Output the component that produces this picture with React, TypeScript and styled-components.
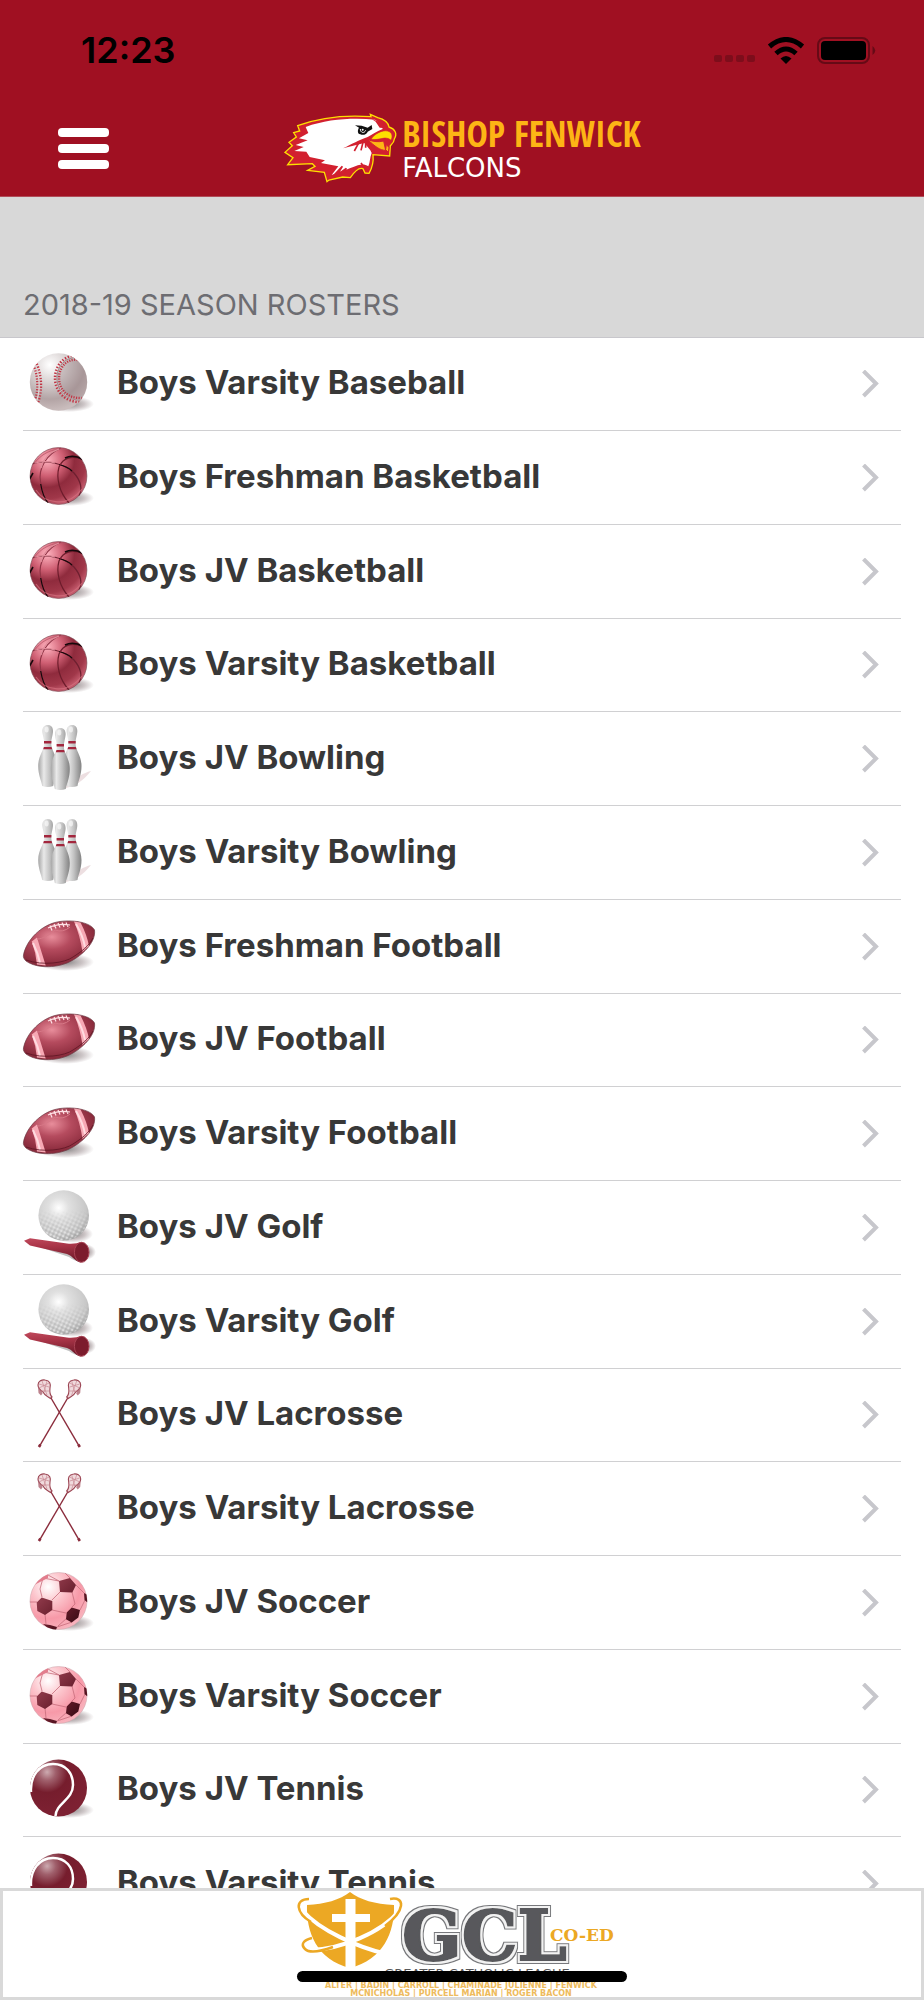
import React from "react";
import styled, { createGlobalStyle } from "styled-components";

const GlobalStyle = createGlobalStyle`
  *, *::before, *::after { box-sizing: border-box; }
  body {
    margin: 0;
    background: #ffffff;
    font-family: Inter, "Liberation Sans", sans-serif;
  }
`;

const Screen = styled.div`
  display: flex;
  flex-direction: column;
  height: 100vh;
  overflow: hidden;
  position: relative;
`;

const Header = styled.header`
  flex: none;
  background: #a01022;
  border-bottom: 1px solid #b04c58;
`;

const StatusBar = styled.div`
  display: flex;
  align-items: center;
  justify-content: space-between;
  height: 100px;
  padding: 0 48px 0 81px;
`;

const Clock = styled.time`
  font-size: 36px;
  line-height: 40px;
  font-weight: 600;
  color: #000000;
`;

const StatusIcons = styled.div`
  display: flex;
  align-items: center;
  gap: 12px;
`;

const NavBar = styled.div`
  display: grid;
  grid-template-columns: 1fr auto 1fr;
  align-items: center;
  height: 96px;
  padding: 0 58px;
`;

const MenuButton = styled.button`
  display: flex;
  flex-direction: column;
  justify-content: space-between;
  width: 51px;
  height: 41px;
  padding: 0;
  border: 0;
  background: none;
  cursor: pointer;
`;

const MenuBar = styled.span`
  height: 9px;
  border-radius: 4px;
  background: #ffffff;
`;

const Brand = styled.a`
  display: flex;
  align-items: center;
  gap: 4px;
  text-decoration: none;
`;

const BrandText = styled.span`
  display: flex;
  flex-direction: column;
`;

const BrandName = styled.span`
  font-family: "Open Sans Condensed", "Roboto Condensed", "Open Sans", sans-serif;
  font-size: 36px;
  line-height: 40px;
  font-weight: 700;
  color: #fdb515;
  white-space: nowrap;
`;

const BrandTeam = styled.span`
  font-family: "DejaVu Sans", sans-serif;
  font-size: 26px;
  line-height: 28px;
  color: #ffffff;
`;

const Content = styled.main`
  flex: 1;
  min-height: 0;
  overflow-y: auto;
  scrollbar-width: none;
`;

const SectionTitle = styled.h1`
  display: flex;
  align-items: flex-end;
  height: 141px;
  margin: 0;
  padding: 0 23px 15px;
  background: #d8d8d8;
  border-bottom: 1px solid #c8c7cc;
  font-size: 29px;
  line-height: 34px;
  font-weight: 400;
  color: #6d6d72;
`;

const RosterList = styled.ul`
  list-style: none;
  margin: 0;
  padding: 0 23px;
`;

const RosterItem = styled.li`
  height: 94px;
  border-bottom: 1px solid #d0d0d2;

  &:first-child,
  &:nth-child(4n) {
    height: 93px;
  }
`;

const RosterLink = styled.a`
  display: flex;
  align-items: center;
  height: 100%;
  padding-right: 22px;
  color: #383838;
  text-decoration: none;
`;

const RosterName = styled.span`
  flex: 1;
  padding: 0 0 4px 22px;
  font-size: 33px;
  line-height: 40px;
  font-weight: 700;
`;

const SportIcon = styled.svg`
  flex: none;
  width: 72px;
  height: 72px;
  overflow: visible;
`;

const Sponsor = styled.footer`
  flex: none;
  height: 112px;
  border: 3px solid #d9d9d9;
  background: #ffffff;
`;

const SponsorLink = styled.a`
  display: flex;
  justify-content: center;
`;

const HomeIndicator = styled.div`
  position: absolute;
  left: 50%;
  bottom: 18px;
  width: 330px;
  height: 11px;
  margin-left: -165px;
  border-radius: 6px;
  background: #000000;
`;

const SharedDefs = styled.svg`
  position: absolute;
`;

const Defs = () => (
  <SharedDefs width="0" height="0" aria-hidden="true">
    <defs>
      <radialGradient id="shadow">
        <stop offset="0" stopColor="#000" stopOpacity=".5" />
        <stop offset=".6" stopColor="#4a3035" stopOpacity=".28" />
        <stop offset="1" stopColor="#4a3035" stopOpacity="0" />
      </radialGradient>
      <radialGradient id="baseball" cx=".35" cy=".2" r=".8">
        <stop offset="0" stopColor="#ffffff" />
        <stop offset=".35" stopColor="#dcd6d6" />
        <stop offset=".75" stopColor="#b3a4a5" />
        <stop offset="1" stopColor="#c9bcbc" />
      </radialGradient>
      <radialGradient id="basketball" cx=".3" cy=".22" r=".8">
        <stop offset="0" stopColor="#ffb3bf" />
        <stop offset=".35" stopColor="#cf5f73" />
        <stop offset=".6" stopColor="#8f2b3d" />
        <stop offset=".85" stopColor="#a03749" />
        <stop offset="1" stopColor="#c35a6c" />
      </radialGradient>
      <linearGradient id="pin">
        <stop offset="0" stopColor="#a5a5a5" />
        <stop offset=".3" stopColor="#e9e9e9" />
        <stop offset=".6" stopColor="#c2c2c2" />
        <stop offset="1" stopColor="#828282" />
      </linearGradient>
      <radialGradient id="football" cx=".4" cy=".35" r=".6">
        <stop offset="0" stopColor="#e88d9b" />
        <stop offset=".45" stopColor="#b54b5e" />
        <stop offset="1" stopColor="#8a2b3c" />
      </radialGradient>
      <radialGradient id="golf" cx=".4" cy=".35" r=".68">
        <stop offset="0" stopColor="#ffffff" />
        <stop offset=".3" stopColor="#e0e0e0" />
        <stop offset=".8" stopColor="#c8c8c8" />
        <stop offset="1" stopColor="#aaaaaa" />
      </radialGradient>
      <pattern id="dimples" width="4" height="4" patternUnits="userSpaceOnUse" patternTransform="rotate(25)">
        <circle cx="1" cy="1" r="1" fill="#8c8c8c" opacity=".4" />
        <circle cx="3" cy="3" r="1" fill="#ffffff" opacity=".7" />
      </pattern>
      <linearGradient id="dimpleFade" x2="0" y2="1">
        <stop offset=".35" stopColor="#000" />
        <stop offset=".95" stopColor="#fff" />
      </linearGradient>
      <mask id="dimpleMask">
        <rect width="72" height="50" fill="url(#dimpleFade)" />
      </mask>
      <linearGradient id="tee" x2=".15" y2="1">
        <stop offset="0" stopColor="#c0495c" />
        <stop offset=".4" stopColor="#a83447" />
        <stop offset="1" stopColor="#701a2a" />
      </linearGradient>
      <radialGradient id="soccer" cx=".32" cy=".25" r=".8">
        <stop offset="0" stopColor="#ffffff" />
        <stop offset=".35" stopColor="#fcc6cd" />
        <stop offset=".7" stopColor="#f799a8" />
        <stop offset="1" stopColor="#f9b4be" />
      </radialGradient>
      <linearGradient id="patch" x2="1" y2="1">
        <stop offset="0" stopColor="#a94b5d" />
        <stop offset=".6" stopColor="#5f1826" />
        <stop offset="1" stopColor="#21050b" />
      </linearGradient>
      <radialGradient id="tennis" cx=".3" cy=".22" r=".75">
        <stop offset="0" stopColor="#cdaab0" />
        <stop offset=".2" stopColor="#a0606c" />
        <stop offset=".48" stopColor="#761d2d" />
        <stop offset="1" stopColor="#7d2132" />
      </radialGradient>
      <clipPath id="ball"><circle cx="35.5" cy="34" r="28.7" /></clipPath>
    </defs>
  </SharedDefs>
);

const BallShadow = () => <ellipse cx="46" cy="56" rx="25" ry="8" fill="url(#shadow)" />;

const Baseball = () => (
  <>
    <BallShadow />
    <circle cx="35.5" cy="34" r="28.7" fill="url(#baseball)" />
    <g clipPath="url(#ball)" fill="none">
      <path d="M53 9C68 20 68 44 57 54C44 50 35 40 34 28C34 18 42 9 53 9Z" fill="#8d7779" opacity=".3" />
      <path d="M11 14C17 26 18 42 13 55" stroke="#c23545" strokeWidth="6" strokeDasharray="1.3 1.5" />
      <path d="M55 10C43 8 34 18 34 30C34 43 44 53 59 52" stroke="#c23545" strokeWidth="6.5" strokeDasharray="1.3 1.5" />
      <path d="M11 14C17 26 18 42 13 55M55 10C43 8 34 18 34 30C34 43 44 53 59 52" stroke="#d9cfcf" strokeWidth="1.5" />
      <path d="M55 10C43 8 34 18 34 30C34 43 44 53 59 52" stroke="#7c6568" strokeWidth=".7" />
    </g>
  </>
);

const Basketball = () => (
  <>
    <BallShadow />
    <circle cx="35.5" cy="34" r="28.4" fill="url(#basketball)" stroke="#74404a" strokeWidth=".6" />
    <g clipPath="url(#ball)" fill="none" strokeWidth="1.2">
      <path d="M38 6C24 12 15 26 17.5 40C18.5 49 21 55 25 61" stroke="#8f3345" />
      <path d="M17.7 42C19 50 21 56 25 61" stroke="#16080b" />
      <path d="M8 22C24 17 42 22 51 31C57 38 60 46 56 54" stroke="#6e2030" />
      <path d="M36 22.5C42 24 46 26 49 29" stroke="#16080b" />
      <path d="M46 61C36 50 33 36 36 25C40 16 49 13 60 17.5" stroke="#6d1c2b" />
      <path d="M42 16C48 13 54 14 60 17.5" stroke="#16080b" strokeWidth="1.6" />
      <path d="M6 38L10 31" stroke="#16080b" strokeWidth="1.6" />
      <path d="M10 23C18 12 28 6 44 7" stroke="#b8586a" strokeWidth=".8" />
      <path d="M36 7C25 11 20 17 18 26M12 21C20 19 26 19 32 21" stroke="#e08c9a" />
    </g>
    <path d="M13 48C22 62 45 66 59 47" fill="none" stroke="#d4717f" strokeWidth="1.2" opacity=".7" />
  </>
);

const Pin = ({ x, y }: { x: number; y: number }) => (
  <g transform={`translate(${x} ${y})`}>
    <path d="M0 0C4 0 5.6 3 5.3 7C5 11 3.5 14 3.5 18C3.5 26 9.5 30 9.5 41C9.5 50 6.5 55 5.5 61Q0 63 -5.5 61C-6.5 55 -9.5 50 -9.5 41C-9.5 30 -3.5 26 -3.5 18C-3.5 14 -5 11 -5.3 7C-5.6 3 -4 0 0 0Z" fill="url(#pin)" />
    <path d="M-3.7 16H3.7V18.5H-3.7ZM-3.8 22H3.8L4.5 24.3H-4.5Z" fill="#a3263d" />
    <ellipse cx="-1" cy="4.5" rx="2" ry="3" fill="#fff" opacity=".6" />
  </g>
);

const Bowling = () => (
  <>
    <path d="M38 66C52 64 60 58 68 48C60 50 54 54 50 60Z" fill="#b98088" opacity=".25" />
    <Pin x={24.7} y={2} />
    <Pin x={49} y={2} />
    <Pin x={37.3} y={5} />
  </>
);

const Football = () => (
  <>
    <ellipse cx="42" cy="51" rx="29" ry="9" fill="url(#shadow)" />
    <path d="M.5 44C3 30 18 13 37 10.5C52 8.5 68 12 71.5 19C73 30 62 42 50 49C36 57.5 14 58 3 50C1 48 0 46 .5 44Z" fill="url(#football)" stroke="#6b3a44" strokeWidth=".7" />
    <path d="M8.7 30.5L14 26.5L22.7 54.5L14 53.5Q13 42 8.7 30.5Z" fill="#f7a9b5" />
    <path d="M51 10.5L57.5 11.5Q64 24 66 35L59.5 41Q57 24 51 10.5Z" fill="#f7a9b5" />
    <path d="M10 32Q15 42 17 52M53 13Q60 25 62 36" stroke="#ffdbe0" strokeWidth="2" fill="none" />
    <path d="M14 28C20 28 26 24 32 19Q40 22 47 16" fill="none" stroke="#d77887" strokeWidth="1" />
    <path d="M25 17Q35 12 47 14M27 14.5l2 5M31 13l2 4.5M35 12l2 4.5M39 11.5l2 4.5M43 11.5l2 4.5" fill="none" stroke="#ffe3e7" strokeWidth="1.2" />
    <path d="M3 49C20 55 42 52 50 46C58 41 66 35 70 27" fill="none" stroke="#5d1523" strokeWidth=".8" />
  </>
);

const Golf = () => (
  <>
    <ellipse cx="50" cy="42" rx="20" ry="9" fill="url(#shadow)" />
    <ellipse cx="62" cy="60" rx="11" ry="8" fill="url(#shadow)" />
    <path d="M8 52L46 65Q52 70 58 69L46 61Z" fill="#000" opacity=".25" />
    <circle cx="40.7" cy="23.5" r="25.3" fill="url(#golf)" />
    <circle cx="40.7" cy="23.5" r="25" fill="url(#dimples)" mask="url(#dimpleMask)" />
    <path d="M1 48.7L7 46.3L44 51.5C51 52.5 54 50.5 59 50.2L58 70.5C52 70 50 64 44 62L7 53.5Z" fill="url(#tee)" />
    <ellipse cx="58.7" cy="60.3" rx="7.3" ry="10" fill="#7c1c2d" stroke="#a94354" strokeWidth="1" />
  </>
);

const LacrosseStick = () => (
  <g>
    <path d="M28 19L56.3 67.3" stroke="#8b2c3c" strokeWidth="1.4" />
    <path d="M55.3 65.5l1.5 2.5" stroke="#8b2c3c" strokeWidth="2.6" />
    <path d="M27.5 19.5C24 17 22 17 20 13C17 11 15 9 15 6C15 2 19 .5 22 1C27 1.5 28 5 27 9C26.5 13 27 16 29 18Z" fill="#f0dadd" stroke="#9b4553" strokeWidth="1.1" />
    <path d="M16 5L26 8M16 9L26 4M19 2L24 16M24 2L21 13M18 12L27 12" stroke="#c98993" strokeWidth=".7" />
    <path d="M15 8L15.5 14L18 16.5L19.5 14.5L18 11Z" fill="#ad6470" opacity=".8" />
  </g>
);

const Lacrosse = () => (
  <>
    <LacrosseStick />
    <g transform="translate(72.7 0) scale(-1 1)"><LacrosseStick /></g>
  </>
);

const Soccer = () => (
  <>
    <BallShadow />
    <circle cx="35.5" cy="34" r="28.5" fill="url(#soccer)" stroke="#c9a3a9" strokeWidth=".5" />
    <g clipPath="url(#ball)">
      <path d="M36 14L20 11L17 22L19 30M37 25L29 33M49 25L52 37L49 40M29 43L43 46M53 18L61 26M14 35L6 35M22 47L23 57M57 43L62 33M34 60L49 55M25 8L36 14M47 11L42 6M44 51L35 59" fill="none" stroke="#c66c7b" strokeWidth=".8" />
      <path d="M36 14L47 11L53 18L49.3 25.5L37 25ZM13.7 35.5L18.7 30.5L29.3 34L29.3 43L22 48L14.3 44ZM43.7 45.5L48.7 40.5L57 43L55.3 50.5L48.7 55.5L43 52.3ZM20 57L27 58L34 60L33 63L27 63ZM61 26L65 28V36L61.5 33Z" fill="url(#patch)" />
      <path d="M11 18L17 10L25 7L25 11L17 15Z" fill="#e27d8d" />
    </g>
  </>
);

const Tennis = () => (
  <>
    <BallShadow />
    <circle cx="35.5" cy="34" r="28.5" fill="url(#tennis)" />
    <path d="M8 38C7 22 16 10 30 10C43 10 50 19 50 31C50 46 33 49 32.5 62" fill="none" stroke="#ffffff" strokeWidth="2.5" clipPath="url(#ball)" />
  </>
);

const sports = {
  baseball: Baseball,
  basketball: Basketball,
  bowling: Bowling,
  football: Football,
  golf: Golf,
  lacrosse: Lacrosse,
  soccer: Soccer,
  tennis: Tennis,
};

type Sport = keyof typeof sports;

const rosters: { name: string; sport: Sport }[] = [
  { name: "Boys Varsity Baseball", sport: "baseball" },
  { name: "Boys Freshman Basketball", sport: "basketball" },
  { name: "Boys JV Basketball", sport: "basketball" },
  { name: "Boys Varsity Basketball", sport: "basketball" },
  { name: "Boys JV Bowling", sport: "bowling" },
  { name: "Boys Varsity Bowling", sport: "bowling" },
  { name: "Boys Freshman Football", sport: "football" },
  { name: "Boys JV Football", sport: "football" },
  { name: "Boys Varsity Football", sport: "football" },
  { name: "Boys JV Golf", sport: "golf" },
  { name: "Boys Varsity Golf", sport: "golf" },
  { name: "Boys JV Lacrosse", sport: "lacrosse" },
  { name: "Boys Varsity Lacrosse", sport: "lacrosse" },
  { name: "Boys JV Soccer", sport: "soccer" },
  { name: "Boys Varsity Soccer", sport: "soccer" },
  { name: "Boys JV Tennis", sport: "tennis" },
  { name: "Boys Varsity Tennis", sport: "tennis" },
];

const Falcon = () => (
  <svg width="115" height="70" viewBox="36 36 345 210" aria-hidden="true">
    <path d="M298 40L320 50C340 55 352 66 354 78C372 84 380 98 370 114C369 126 362 130 358 134L356 165L306 161C308 180 304 200 294 217L282 216L276 203C262 198 250 212 238 230L215 228L174 237L168 242L160 214L110 208L132 196L124 188L50 191L66 170L42 154L64 134L54 124L76 108L68 95L86 90L80 74C150 48 230 42 300 47Z" fill="#d2202f" stroke="#fde000" strokeWidth="4" strokeLinejoin="miter" />
    <path d="M104 78C170 54 245 50 312 56L330 70L335 84C315 92 305 100 290 108C262 118 245 128 216 142L280 126L298 148L302 156C296 170 298 182 292 196C270 180 245 202 208 212L182 222L202 196L150 186L162 178L116 168L106 152L70 150L98 138L74 132L110 118L84 112L112 96Z" fill="#ffffff" />
    <path d="M302 54L334 66L346 82L326 80L314 62Z" fill="#d2202f" />
    <path d="M186 226L214 196L198 222L226 202L214 224M270 186L286 208M250 150L264 124M270 148L276 124M284 140L284 122" fill="none" stroke="#d2202f" strokeWidth="5" />
    <path d="M300 114C312 98 334 86 350 90C364 94 366 106 360 118C354 112 344 110 336 112C324 114 312 118 300 114Z" fill="#fde000" stroke="#d2202f" strokeWidth="2" />
    <path d="M290 116C308 122 322 124 338 120L344 148C326 148 312 136 290 116ZM346 130L354 140L352 154L344 146Z" fill="#fdb515" stroke="#d2202f" strokeWidth="3" />
    <path d="M252 73L272 74L290 80L302 72L304 84L290 92C288 100 276 104 268 100C258 98 260 86 264 80Z" fill="#111111" />
    <path d="M268 84C268 96 280 98 284 88" fill="none" stroke="#ffffff" strokeWidth="3" />
    <circle cx="275" cy="86" r="3" fill="#ffffff" />
  </svg>
);

const LeagueLogo = () => (
  <svg width="330" height="106" viewBox="0 0 330 106" role="img" aria-label="GCL Co-Ed">
    <defs>
      <filter id="outline" x="-10%" y="-10%" width="120%" height="120%">
        <feMorphology in="SourceAlpha" operator="dilate" radius="3" result="outer" />
        <feFlood floodColor="#77787b" />
        <feComposite in2="outer" operator="in" result="rim" />
        <feMorphology in="SourceAlpha" operator="dilate" radius="2" result="inner" />
        <feFlood floodColor="#f2f2f2" />
        <feComposite in2="inner" operator="in" result="gap" />
        <feMerge>
          <feMergeNode in="rim" />
          <feMergeNode in="gap" />
          <feMergeNode in="SourceGraphic" />
        </feMerge>
      </filter>
    </defs>
    <g fill="none">
      <path d="M53 1C43 9 28 13 10 14C9 41 20 69 53 77C86 69 98 41 97 14C78 13 63 9 53 1Z" fill="#eca824" />
      <path d="M6 20C22 39 62 57 90 63" stroke="#fff" strokeWidth="4" />
      <path d="M102 20C84 42 44 58 14 59" stroke="#fff" strokeWidth="4" />
      <path d="M48.5 8H58.5V78H48.5ZM35 23H73V31H35Z" fill="#ffffff" />
      <path d="M12 8C-3 8 -1 22 14 31" stroke="#eca824" strokeWidth="2.5" />
      <path d="M93 8C109 5 108 20 88 35M36 56C22 61 12 62 8 58C3 53 7 49 15 47" stroke="#eca824" strokeWidth="2.5" />
    </g>
    <text x="105" y="69" fontFamily="DejaVu Serif, serif" fontWeight="700" fontSize="70" fill="#58595b" stroke="#58595b" strokeWidth="2" filter="url(#outline)">GCL</text>
    <text x="253" y="50" fontFamily="DejaVu Serif, serif" fontWeight="700" fontSize="17" fill="#eca824">CO-ED</text>
    <text x="180" y="87" textAnchor="middle" fontFamily="DejaVu Sans, sans-serif" fontSize="13" fill="#58595b">GREATER CATHOLIC LEAGUE</text>
    <text x="164" y="97" textAnchor="middle" fontFamily="DejaVu Sans, sans-serif" fontWeight="700" fontSize="8" fill="#eebb5c">ALTER | BADIN | CARROLL | CHAMINADE JULIENNE | FENWICK</text>
    <text x="164" y="105" textAnchor="middle" fontFamily="DejaVu Sans, sans-serif" fontWeight="700" fontSize="8" fill="#eebb5c">MCNICHOLAS | PURCELL MARIAN | ROGER BACON</text>
  </svg>
);

const SignalDots = () => (
  <svg width="41" height="24" viewBox="0 0 41 24" aria-hidden="true">
    {[0, 11, 22, 33].map((x) => (
      <rect key={x} x={x} y="17" width="8" height="7" rx="2" fill="#7d0d1b" />
    ))}
  </svg>
);

const Wifi = () => (
  <svg width="38" height="27" viewBox="0 0 38 27" aria-hidden="true">
    <path d="M19 27L13.5 21.5Q19 16.5 24.5 21.5Z" />
    <path d="M9 16.5Q19 7.5 29 16.5" fill="none" stroke="#000" strokeWidth="5" />
    <path d="M2.5 9.5Q19 -4.5 35.5 9.5" fill="none" stroke="#000" strokeWidth="5" />
  </svg>
);

const Battery = () => (
  <svg width="59" height="27" viewBox="0 0 59 27" aria-hidden="true">
    <rect x="1" y="1" width="51" height="25" rx="7" fill="none" stroke="#660a16" strokeWidth="2" />
    <rect x="4" y="4" width="45" height="19" rx="4" />
    <path d="M55.5 9Q61 13.5 55.5 18Z" fill="#660a16" />
  </svg>
);

const Chevron = () => (
  <svg width="18" height="28" viewBox="0 0 18 28" aria-hidden="true">
    <path d="M2.5 1L15 13.5L2.5 26" fill="none" stroke="#c7c7cc" strokeWidth="4" />
  </svg>
);

export default function App() {
  return (
    <Screen>
      <GlobalStyle />
      <Defs />
      <Header>
        <StatusBar>
          <Clock>12:23</Clock>
          <StatusIcons>
            <SignalDots />
            <Wifi />
            <Battery />
          </StatusIcons>
        </StatusBar>
        <NavBar>
          <MenuButton type="button" aria-label="Open menu">
            <MenuBar />
            <MenuBar />
            <MenuBar />
          </MenuButton>
          <Brand href="#">
            <Falcon />
            <BrandText>
              <BrandName>BISHOP FENWICK</BrandName>
              <BrandTeam>FALCONS</BrandTeam>
            </BrandText>
          </Brand>
        </NavBar>
      </Header>
      <Content>
        <SectionTitle>2018-19 SEASON ROSTERS</SectionTitle>
        <RosterList>
          {rosters.map(({ name, sport }) => {
            const Drawing = sports[sport];
            return (
              <RosterItem key={name}>
                <RosterLink href="#">
                  <SportIcon viewBox="0 0 72 72" aria-hidden="true">
                    <Drawing />
                  </SportIcon>
                  <RosterName>{name}</RosterName>
                  <Chevron />
                </RosterLink>
              </RosterItem>
            );
          })}
        </RosterList>
      </Content>
      <Sponsor>
        <SponsorLink href="#">
          <LeagueLogo />
        </SponsorLink>
      </Sponsor>
      <HomeIndicator />
    </Screen>
  );
}
